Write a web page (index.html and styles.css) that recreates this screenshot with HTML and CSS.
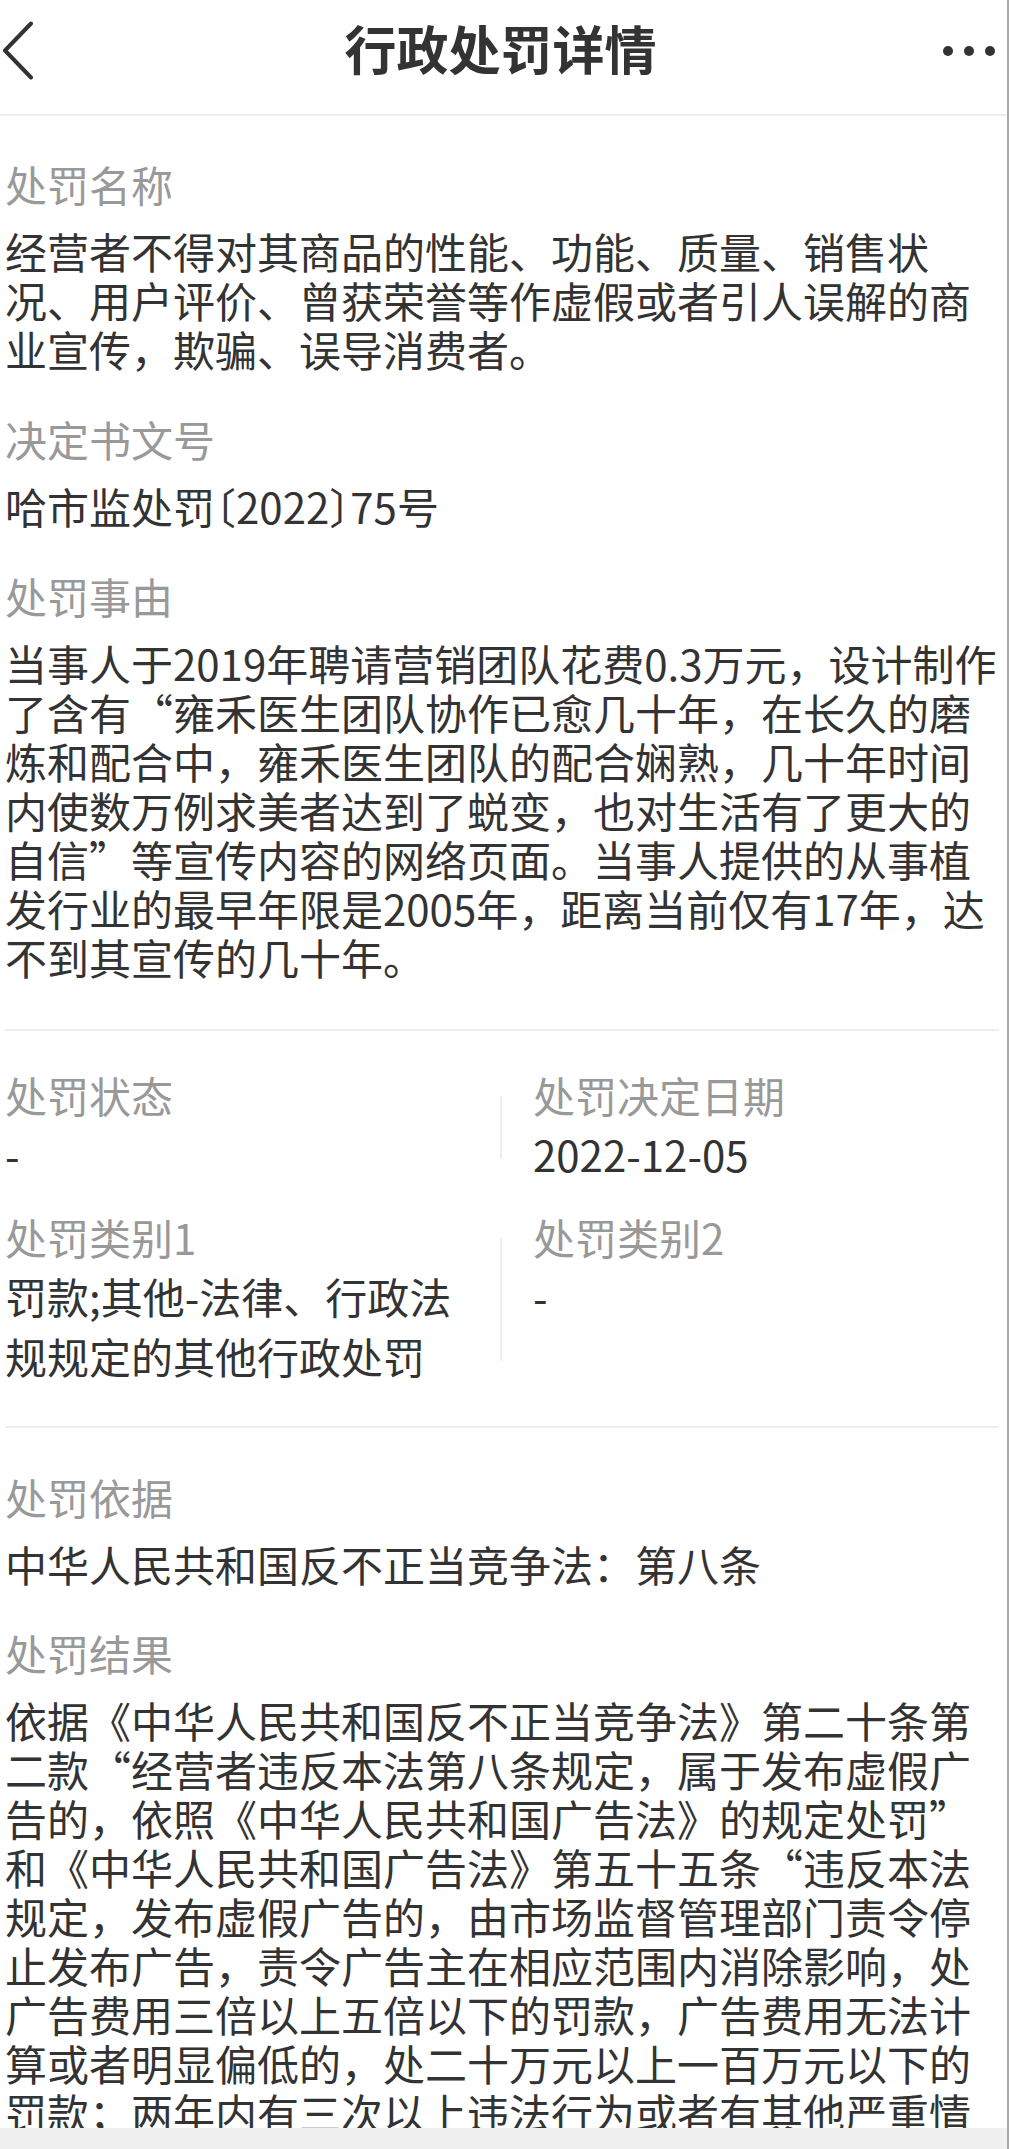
FILE: index.html
```html
<!DOCTYPE html>
<html lang="zh-CN">
<head>
<meta charset="utf-8">
<title>行政处罚详情</title>
<link rel="stylesheet" href="styles.css">
</head>
<body>
<div class="page">
  <header class="topbar">
    <span class="back">
      <svg width="36" height="60" viewBox="0 0 36 60"><polyline points="31,2.5 5,29.5 31,56.5" fill="none" stroke="#333" stroke-width="4" stroke-linecap="round" stroke-linejoin="round"/></svg>
    </span>
    <h1 class="title">行政处罚详情</h1>
    <span class="more">
      <svg width="52" height="12" viewBox="0 0 52 12"><circle cx="5" cy="6" r="5" fill="#333"/><circle cx="26" cy="6" r="5" fill="#333"/><circle cx="47" cy="6" r="5" fill="#333"/></svg>
    </span>
  </header>

  <main class="content">
    <section class="block first">
      <div class="field">
        <div class="label">处罚名称</div>
        <div class="value">经营者不得对其商品的性能、功能、质量、销售状况、用户评价、曾获荣誉等作虚假或者引人误解的商业宣传，欺骗、误导消费者。</div>
      </div>
      <div class="field">
        <div class="label">决定书文号</div>
        <div class="value">哈市监处罚<span class="half">〔</span>2022<span class="half">〕</span>75号</div>
      </div>
      <div class="field">
        <div class="label">处罚事由</div>
        <div class="value">当事人于2019年聘请营销团队花费0.3万元，设计制作了含有“雍禾医生团队协作已愈几十年，在长久的磨炼和配合中，雍禾医生团队的配合娴熟，几十年时间内使数万例求美者达到了蜕变，也对生活有了更大的自信”等宣传内容的网络页面。当事人提供的从事植发行业的最早年限是2005年，距离当前仅有17年，达不到其宣传的几十年。</div>
      </div>
    </section>

    <section class="grid-block">
      <div class="row">
        <div class="cell">
          <div class="glabel">处罚状态</div>
          <div class="gvalue">-</div>
        </div>
        <div class="vline"></div>
        <div class="cell right">
          <div class="glabel">处罚决定日期</div>
          <div class="gvalue">2022-12-05</div>
        </div>
      </div>
      <div class="row">
        <div class="cell">
          <div class="glabel">处罚类别1</div>
          <div class="gvalue">罚款;其他-法律、行政法规规定的其他行政处罚</div>
        </div>
        <div class="vline"></div>
        <div class="cell right">
          <div class="glabel">处罚类别2</div>
          <div class="gvalue">-</div>
        </div>
      </div>
    </section>

    <section class="block last">
      <div class="field">
        <div class="label">处罚依据</div>
        <div class="value">中华人民共和国反不正当竞争法：第八条</div>
      </div>
      <div class="field">
        <div class="label">处罚结果</div>
        <div class="value">依据《中华人民共和国反不正当竞争法》第二十条第二款“经营者违反本法第八条规定，属于发布虚假广告的，依照《中华人民共和国广告法》的规定处罚”和《中华人民共和国广告法》第五十五条“违反本法规定，发布虚假广告的，由市场监督管理部门责令停止发布广告，责令广告主在相应范围内消除影响，处广告费用三倍以上五倍以下的罚款，广告费用无法计算或者明显偏低的，处二十万元以上一百万元以下的罚款；两年内有三次以上违法行为或者有其他严重情节的，处广告费用五倍以上十倍以下的罚款，广告费用无法计算或者明显偏低的，处一百万元以上二百万元以下的罚款，可以吊销营业执照，并由广告审查机关撤销广告审查批准文件、一年内不受理其广告审查申请。”</div>
      </div>
    </section>
  </main>
</div>
<div class="bottom-bar"></div>
<div class="edge"></div>
</body>
</html>
```

FILE: styles.css
```css
html {
  overflow: hidden;
  background: #ffffff;
}

body {
  margin: 0;
  background: #ffffff;
  font-family: "Noto Sans CJK SC", "Noto Sans", sans-serif;
  color: #333333;
}

.page {
  width: 100%;
}

.topbar {
  display: grid;
  grid-template-columns: 1fr auto 1fr;
  align-items: center;
  height: 101px;
  padding: 0 8px 13px 0;
  border-bottom: 2px solid #eeeeee;
}

.back {
  display: flex;
  justify-self: start;
}

.title {
  margin: 0 0 6px;
  font-size: 52px;
  line-height: 60px;
  font-weight: 700;
  color: #333333;
}

.more {
  display: flex;
  justify-self: end;
  margin-right: 6px;
}

.content {
  padding: 0 10px 0 5px;
}

.block {
  display: flex;
  flex-direction: column;
  gap: 41px;
  padding: 43px 0 48px;
  border-bottom: 2px solid #eeeeee;
}

.block.last {
  border-bottom: none;
  padding-top: 44px;
  gap: 40px;
}

.label {
  font-size: 42px;
  line-height: 49px;
  color: #999999;
}

.value {
  margin-top: 18px;
  font-size: 42px;
  line-height: 49px;
  color: #333333;
}

.half {
  font-feature-settings: "halt";
}

.grid-block {
  display: flex;
  flex-direction: column;
  gap: 24px;
  padding: 35px 0 40px;
  border-bottom: 2px solid #eeeeee;
}

.row {
  display: flex;
}

.cell {
  flex: 0 0 470px;
  padding-right: 25px;
}

.cell.right {
  flex: 1 1 auto;
  padding: 0 0 0 31px;
}

.vline {
  width: 2px;
  margin: 30px 0 25px;
  background: #eeeeee;
}

.glabel {
  font-size: 42px;
  line-height: 58px;
  color: #999999;
}

.gvalue {
  font-size: 42px;
  line-height: 60px;
  color: #333333;
}

.bottom-bar {
  position: fixed;
  left: 0;
  right: 0;
  bottom: 0;
  height: 21px;
  background: #f0f0f0;
}

.edge {
  position: fixed;
  top: 0;
  right: 0;
  bottom: 0;
  width: 2px;
  background: #a8a8a8;
}
```
